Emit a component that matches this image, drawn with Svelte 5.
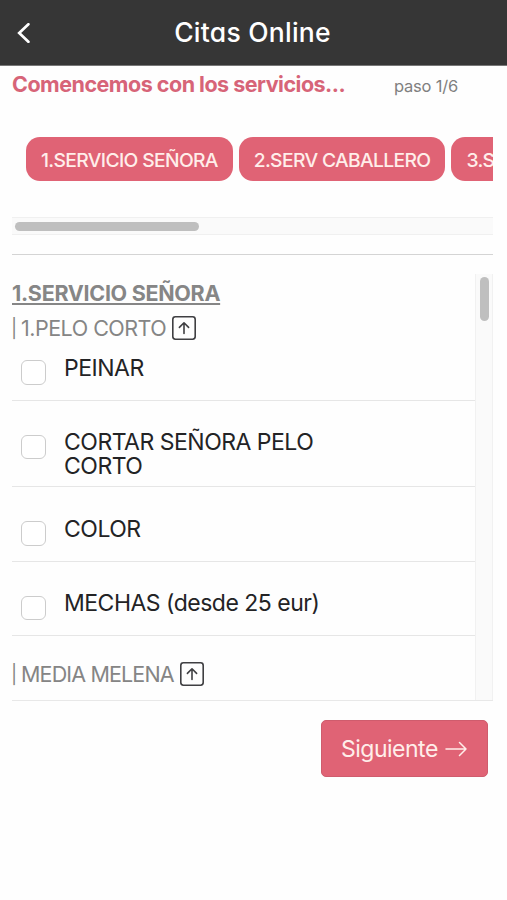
<script lang="ts">
  const categories = ['1.SERVICIO SEÑORA', '2.SERV CABALLERO', '3.S'];

  let services = $state([
    { name: 'PEINAR', checked: false },
    { name: 'CORTAR SEÑORA PELO CORTO', checked: false },
    { name: 'COLOR', checked: false },
    { name: 'MECHAS (desde 25 eur)', checked: false }
  ]);
</script>

{#snippet arrowUp()}
  <svg class="toggle" viewBox="0 0 24 24" fill="none" stroke="currentColor">
    <rect x="0.8" y="0.8" width="22.4" height="22.4" rx="2.6" stroke-width="1.6" />
    <path d="M12 17.5V6.9M7.4 11.4L12 6.8l4.6 4.6" stroke-width="1.6" stroke-linecap="round" stroke-linejoin="round" />
  </svg>
{/snippet}

<header>
  <svg class="back" viewBox="0 0 14 20" fill="none" stroke="#fff">
    <path d="M11.4 1.3L2.2 10l9.2 8.7" stroke-width="2.7" stroke-linecap="round" stroke-linejoin="miter" />
  </svg>
  <h1>Citas Online</h1>
</header>

<main>
  <div class="intro">
    <h2>Comencemos con los servicios...</h2>
    <span class="step">paso 1/6</span>
  </div>

  <div class="categories">
    {#each categories as category}
      <button class="chip">{category}</button>
    {/each}
  </div>
  <div class="track-x"><div class="thumb"></div></div>
  <hr />

  <div class="panel">
    <div class="list">
      <h3><span>1.SERVICIO SEÑORA</span></h3>
      <div class="group"><span class="bar">|</span><span>1.PELO CORTO</span>{@render arrowUp()}</div>
      {#each services as service}
        <label class="service">
          <input type="checkbox" bind:checked={service.checked} />
          <span>{service.name}</span>
        </label>
      {/each}
      <div class="group last"><span class="bar">|</span><span>MEDIA MELENA</span>{@render arrowUp()}</div>
    </div>
    <div class="track-y"><div class="thumb"></div></div>
  </div>

  <div class="actions">
    <button class="next">
      <span>Siguiente</span>
      <svg viewBox="0 0 22 16" fill="none" stroke="currentColor">
        <path d="M1 8h20M14.5 1.5L21 8l-6.5 6.5" stroke-width="1.5" stroke-linecap="round" stroke-linejoin="round" />
      </svg>
    </button>
  </div>
</main>

<style>
  :global(body) {
    background: #fefefe;
    font-family: Inter, "Liberation Sans", sans-serif;
    overflow: hidden;
  }

  h1, h2, h3 {
    margin: 0;
  }

  button {
    font: inherit;
    border: 0;
  }

  header {
    display: grid;
    grid-template-columns: 60px 1fr 62px;
    align-items: center;
    box-sizing: border-box;
    height: 66px;
    border-bottom: 1px solid #777;
    background: #363636;
    color: #fff;
  }

  .back {
    width: 14px;
    height: 20px;
    margin-left: 17px;
  }

  h1 {
    padding-bottom: 2px;
    font-size: 26.5px;
    font-weight: 450;
    line-height: 32px;
    letter-spacing: 0.25px;
    text-align: center;
    white-space: nowrap;
    font-feature-settings: "cv11";
  }

  main {
    padding: 0 14px 0 12px;
  }

  .intro {
    display: flex;
    align-items: center;
    justify-content: space-between;
    height: 36px;
    padding: 0 35px 2px 0;
    white-space: nowrap;
  }

  h2 {
    color: #d76478;
    font-size: 21.5px;
    font-weight: 700;
    letter-spacing: -0.5px;
  }

  .step {
    padding-top: 4px;
    color: #808080;
    font-size: 16.5px;
    letter-spacing: -0.2px;
  }

  .categories {
    display: flex;
    gap: 6px;
    overflow: hidden;
    padding: 33px 0 36px 14px;
  }

  .chip {
    flex: none;
    width: 206.7px;
    height: 44px;
    padding: 1px 0 0 15px;
    border-radius: 14px;
    background: #e06375;
    color: #ffeeea;
    font-size: 19.3px;
    font-weight: 500;
    letter-spacing: -0.65px;
    text-align: left;
    white-space: nowrap;
  }

  .track-x {
    box-sizing: border-box;
    height: 18px;
    padding: 4px 3px;
    border: solid #f0f0f0;
    border-width: 1px 0;
    background: #fafafa;
  }

  .thumb {
    border-radius: 5px;
    background: #bfbfbf;
  }

  .track-x .thumb {
    width: 184px;
    height: 9px;
  }

  hr {
    height: 1px;
    margin: 19px 0;
    border: 0;
    background: #d4d4d4;
  }

  .panel {
    display: flex;
    box-sizing: border-box;
    height: 427px;
    border-bottom: 1px solid #e8e8e8;
  }

  .list {
    flex: 1;
  }

  h3 {
    height: 39px;
    color: #868686;
    font-size: 21.5px;
    font-weight: 700;
    line-height: 39px;
    letter-spacing: -0.3px;
    text-decoration: underline;
    text-decoration-thickness: 2px;
    text-underline-offset: 2px;
    white-space: nowrap;
  }

  .group {
    display: flex;
    align-items: center;
    gap: 6px;
    height: 30px;
    color: #858585;
    font-size: 21.5px;
    line-height: 30px;
    letter-spacing: -0.5px;
    white-space: nowrap;
  }

  .bar {
    width: 4px;
    margin-left: -1px;
    font-size: 18.5px;
  }

  .group.last {
    padding-top: 23px;
    letter-spacing: -0.85px;
  }

  .toggle {
    width: 24px;
    height: 24px;
    color: #3f3f42;
  }

  .service {
    display: flex;
    align-items: flex-start;
    box-sizing: border-box;
    min-height: 74.5px;
    padding: 29.4px 100px 8px 9px;
    border-bottom: 1px solid #e6e6e6;
    color: #232325;
    font-size: 23px;
    line-height: 24px;
    letter-spacing: -0.5px;
  }

  .group + .service {
    min-height: 58px;
    padding-top: 12.8px;
  }

  .service input {
    appearance: none;
    flex: none;
    box-sizing: border-box;
    width: 24.5px;
    height: 24.5px;
    margin: 4.5px 18.5px -6px 0;
    border: 1.5px solid #ccc;
    border-radius: 6px;
    background: #fff;
  }

  .track-y {
    box-sizing: border-box;
    width: 18px;
    padding: 3px 4px;
    border: solid #f1f1f1;
    border-width: 0 1px;
    background: #fafafa;
  }

  .track-y .thumb {
    width: 9px;
    height: 44px;
  }

  .actions {
    display: flex;
    justify-content: flex-end;
    padding: 19px 5px 0 0;
  }

  .next {
    display: flex;
    align-items: center;
    justify-content: space-between;
    box-sizing: border-box;
    width: 167px;
    height: 57px;
    padding: 0 20px 0 19px;
    border: 1px solid #cf5c6d;
    border-radius: 5px;
    background: #e06375;
    color: #ffeeea;
    font-size: 23px;
    letter-spacing: -0.5px;
  }

  .next svg {
    width: 22px;
    height: 16px;
  }
</style>
